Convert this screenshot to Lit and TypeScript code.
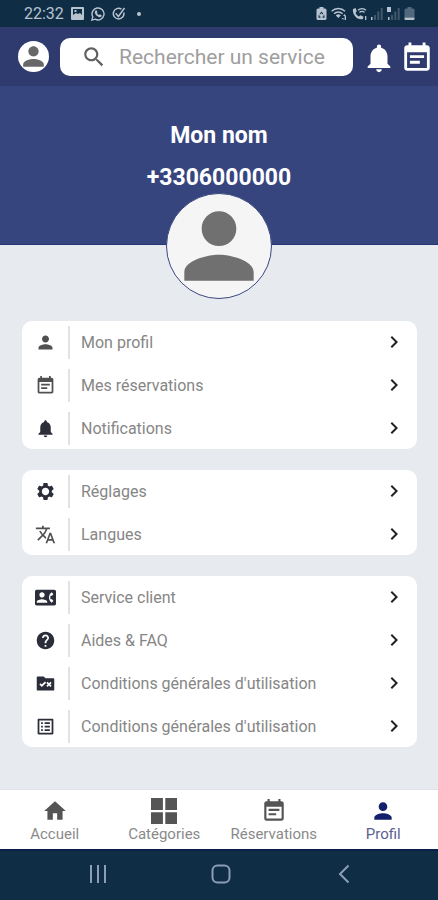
import { LitElement, html, css, svg } from "lit";
import { customElement, property } from "lit/decorators.js";

const ICONS: Record<string, string> = {
  person:
    "M12 12c2.21 0 4-1.79 4-4s-1.79-4-4-4-4 1.79-4 4 1.79 4 4 4zm0 2c-2.67 0-8 1.34-8 4v2h16v-2c0-2.66-5.33-4-8-4z",
  event:
    "M17 10H7v2h10v-2zm2-7h-1V1h-2v2H8V1H6v2H5c-1.11 0-1.99.9-1.99 2L3 19c0 1.1.89 2 2 2h14c1.1 0 2-.9 2-2V5c0-1.1-.9-2-2-2zm0 16H5V8h14v11zm-5-5H7v2h7v-2z",
  bell:
    "M12 22c1.1 0 2-.9 2-2h-4c0 1.1.89 2 2 2zm6-6v-5c0-3.07-1.64-5.64-4.5-6.32V4c0-.83-.67-1.5-1.5-1.5s-1.5.67-1.5 1.5v.68C7.63 5.36 6 7.92 6 11v5l-2 2v1h16v-1l-2-2z",
  settings:
    "M19.14 12.94c.04-.3.06-.61.06-.94 0-.32-.02-.64-.07-.94l2.03-1.58c.18-.14.23-.41.12-.61l-1.92-3.32c-.12-.22-.37-.29-.59-.22l-2.39.96c-.5-.38-1.03-.7-1.62-.94l-.36-2.54c-.04-.24-.24-.41-.48-.41h-3.84c-.24 0-.43.17-.47.41l-.36 2.54c-.59.24-1.13.57-1.62.94l-2.39-.96c-.22-.08-.47 0-.59.22L2.74 8.87c-.12.21-.08.47.12.61l2.03 1.58c-.05.3-.09.63-.09.94s.02.64.07.94l-2.03 1.58c-.18.14-.23.41-.12.61l1.92 3.32c.12.22.37.29.59.22l2.39-.96c.5.38 1.03.7 1.62.94l.36 2.54c.05.24.24.41.48.41h3.84c.24 0 .44-.17.47-.41l.36-2.54c.59-.24 1.13-.56 1.62-.94l2.39.96c.22.08.47 0 .59-.22l1.92-3.32c.12-.22.07-.47-.12-.61l-2.01-1.58zM12 16.2c-2.32 0-4.2-1.88-4.2-4.2s1.88-4.2 4.2-4.2 4.2 1.88 4.2 4.2-1.88 4.2-4.2 4.2z",
  translate:
    "M12.87 15.07l-2.54-2.51.03-.03c1.74-1.94 2.98-4.17 3.71-6.53H17V4h-7V2H8v2H1v1.99h11.17C11.5 7.92 10.44 9.75 9 11.35 8.07 10.32 7.3 9.19 6.69 8h-2c.73 1.63 1.73 3.17 2.98 4.56l-5.09 5.02L4 19l5-5 3.11 3.11.76-2.04zM18.5 10h-2L12 22h2l1.12-3h4.75L21 22h2l-4.5-12zm-2.62 7l1.62-4.33L19.12 17h-3.24z",
  contact:
    "M22 3H2C.9 3 0 3.9 0 5v14c0 1.1.9 2 2 2h20c1.1 0 1.99-.9 1.99-2L24 5c0-1.1-.9-2-2-2zM8 6c1.66 0 3 1.34 3 3s-1.34 3-3 3-3-1.34-3-3 1.34-3 3-3zm6 12H2v-1c0-2 4-3.1 6-3.1s6 1.1 6 3.1v1zm3.85-4h1.64L21 16l-1.99 1.99c-1.31-.98-2.28-2.38-2.73-3.99-.18-.64-.28-1.31-.28-2s.1-1.36.28-2c.45-1.62 1.42-3.01 2.73-3.99L21 8l-1.51 2h-1.64c-.22.63-.35 1.3-.35 2s.13 1.37.35 2z",
  help:
    "M12 2C6.48 2 2 6.48 2 12s4.48 10 10 10 10-4.48 10-10S17.52 2 12 2zm1 17h-2v-2h2v2zm2.07-7.75l-.9.92C13.45 12.9 13 13.5 13 15h-2v-.5c0-1.1.45-2.1 1.17-2.83l1.24-1.26c.37-.36.59-.86.59-1.41 0-1.1-.9-2-2-2s-2 .9-2 2H8c0-2.21 1.79-4 4-4s4 1.79 4 4c0 .88-.36 1.68-.93 2.25z",
  rules:
    "M20 6h-8l-2-2H3c-.6 0-1 .4-1 1v14c0 .6.4 1 1 1h18c.6 0 1-.4 1-1V7c0-.6-.4-1-1-1zM7.83 16L5 13.17l1.41-1.41 1.41 1.41 3.54-3.54 1.41 1.41L7.83 16zM17.41 13L19 14.59 17.59 16 16 14.41 14.41 16 13 14.59 14.59 13 13 11.41 14.41 10 16 11.59 17.59 10 19 11.41 17.41 13z",
  list:
    "M19 5v14H5V5h14m1.1-2H3.9c-.5 0-.9.4-.9.9v16.2c0 .4.4.9.9.9h16.2c.4 0 .9-.5.9-.9V3.9c0-.5-.5-.9-.9-.9zM11 7h6v2h-6V7zm0 4h6v2h-6v-2zm0 4h6v2h-6zM7 7h2v2H7zm0 4h2v2H7zm0 4h2v2H7z",
  search:
    "M15.5 14h-.79l-.28-.27C15.41 12.59 16 11.11 16 9.5 16 5.91 13.09 3 9.5 3S3 5.91 3 9.5 5.91 16 9.5 16c1.61 0 3.09-.59 4.23-1.57l.27.28v.79l5 4.99L20.49 19l-4.99-5zm-6 0C7.01 14 5 11.99 5 9.5S7.01 5 9.5 5 14 7.01 14 9.5 11.99 14 9.5 14z",
  home: "M10 20v-6h4v6h5v-8h3L12 3 2 12h3v8z",
  grid: "M0 0h11v11H0zM13.200 0h10.800v11H13.200zM0 13.200h11V24H0zM13.200 13.200h10.800V24H13.200z",
  chevron: "M10 6L8.590 7.410 13.170 12l-4.580 4.590L10 18l6-6z",
};

@customElement("ui-icon")
export class UiIcon extends LitElement {
  @property() name = "";

  static styles = css`
    :host {
      display: block;
      flex: none;
      width: 24px;
      height: 24px;
    }
    svg {
      display: block;
      width: 100%;
      height: 100%;
      fill: currentColor;
    }
  `;

  render() {
    return html`<svg viewBox="0 0 24 24" aria-hidden="true">
      ${svg`<path fill-rule="evenodd" d=${ICONS[this.name] ?? ""}></path>`}
    </svg>`;
  }
}

@customElement("status-bar")
export class StatusBar extends LitElement {
  static styles = css`
    :host {
      display: flex;
      align-items: center;
      height: 27px;
      padding: 0 23px 0 24px;
      background: #102d46;
      color: #b7c3cf;
      font-size: 16px;
      line-height: 20px;
    }
    .left,
    .right {
      display: flex;
      align-items: center;
    }
    .left {
      gap: 7px;
      flex: 1;
    }
    .right {
      gap: 4px;
    }
    svg {
      display: block;
      flex: none;
    }
    .dot {
      width: 4px;
      height: 4px;
      margin-left: 4px;
      border-radius: 50%;
      background: #b7c3cf;
    }
  `;

  render() {
    return html`
      <div class="left">
        <time>22:32</time>
        <svg width="13" height="13" viewBox="0 0 13 13">
          <path fill="#b7c3cf" fill-rule="evenodd" d="M1 0h11a1 1 0 0 1 1 1v11a1 1 0 0 1-1 1H1a1 1 0 0 1-1-1V1a1 1 0 0 1 1-1zM2 2v6l3-2 2 1 2-1 2 2V2zM3.500 3h2v2h-2z" />
        </svg>
        <svg width="14" height="14" viewBox="0 0 14 14">
          <path fill="none" stroke="#b7c3cf" stroke-width="1.400" d="M.9 13.100l.9-3.200a6 6 0 1 1 2.300 2.300z" />
          <path fill="#b7c3cf" d="M4.600 3.500l1-.2.9 1.900-.6.900c.5 1 1.200 1.600 2.100 2l.9-.8 1.800.9c.1 1.300-.9 2-2 2C6.300 10 4 7.500 3.800 5.300c0-.8.3-1.400.8-1.800z" />
        </svg>
        <svg width="14" height="14" viewBox="0 0 14 14">
          <path fill="none" stroke="#b7c3cf" stroke-width="1.500" d="M9.500 2.200a5.300 5.300 0 1 0 2.300 3.300M3.700 6.300l2.700 3.200L12.500 1" />
        </svg>
        <span class="dot"></span>
      </div>
      <div class="right">
        <svg width="11" height="13" viewBox="0 0 11 13">
          <path fill="#b7c3cf" fill-rule="evenodd" d="M3.500 0h4v1.500H9a1.500 1.500 0 0 1 1.500 1.500v8.500A1.500 1.500 0 0 1 9 13H2a1.500 1.500 0 0 1-1.500-1.500V3A1.500 1.500 0 0 1 2 1.500h1.500zM5.500 4.500L3.300 7.200h1.200L5.500 6l1 1.200h1.200zM2.500 8.200v2.500h2V9.500h-1V8.200zm4 1.300v1.200h2V8.200h-1v1.300z" />
        </svg>
        <svg width="17" height="14" viewBox="0 0 17 14">
          <path fill="none" stroke="#b7c3cf" stroke-width="1.400" d="M.6 4.300a9.500 9.500 0 0 1 13.400 0M3 6.800a6 6 0 0 1 8.600 0" />
          <path fill="#b7c3cf" d="M4.800 8.500a3.600 3.600 0 0 1 5 0L7.300 11zM12 9l1.700-2 1.300 2v4h-1.400V9zM10.500 11h2v2z" />
        </svg>
        <svg width="15" height="14" viewBox="0 0 15 14">
          <path fill="#b7c3cf" d="M1 2l2.500-1 1.300 3.200-1.200 1.500c.6 1.700 1.700 2.900 3.300 3.800l1.600-1.200 3 1.500-.6 2.200C5.700 13.500 0 8 1 2zM13 9h1.300v4H13z" />
          <path fill="none" stroke="#b7c3cf" stroke-width="1.300" d="M6 3.300a5.500 5.500 0 0 1 8 0M7.500 5.500a3.500 3.500 0 0 1 5 0" />
        </svg>
        <svg width="12" height="13" viewBox="0 0 12 13">
          <path fill="#b7c3cf" d="M0 10h1.500v3H0z" />
          <path fill="#40586c" d="M3 8h2v5H3zM6.300 4.500h2V13h-2zM9.700 1h2v12h-2z" />
        </svg>
        <svg width="13" height="13" viewBox="0 0 13 13">
          <path fill="#b7c3cf" d="M0 0h4v5H0zM1 10h1.500v3H1z" />
          <path fill="#40586c" d="M4 8h2v5H4zM7.300 4.500h2V13h-2zM10.700 1h2v12h-2z" />
        </svg>
        <svg width="11" height="13" viewBox="0 0 11 13">
          <path fill="#52697d" d="M3.500 0h4v1.500H9A1.500 1.500 0 0 1 10.500 3v7.500H.5V3A1.500 1.500 0 0 1 2 1.500h1.500z" />
          <path fill="#b7c3cf" d="M.5 10.500h10V12a1 1 0 0 1-1 1h-8a1 1 0 0 1-1-1z" />
        </svg>
      </div>
    `;
  }
}

@customElement("top-bar")
export class TopBar extends LitElement {
  static styles = css`
    :host {
      display: flex;
      align-items: center;
      height: 59px;
      padding: 0 4px 0 18px;
      box-sizing: border-box;
      background: #2f3a6f;
    }
    button {
      display: block;
      flex: none;
      padding: 0;
      border: 0;
      background: none;
      color: #fff;
    }
    .avatar {
      width: 31px;
      height: 31px;
      border-radius: 50%;
      background: #fff;
      color: #686868;
    }
    .avatar ui-icon {
      width: 31px;
      height: 31px;
    }
    .search {
      display: flex;
      align-items: center;
      gap: 12px;
      flex: 1;
      min-width: 0;
      height: 38px;
      margin: 0 9px 0 11px;
      padding: 0 8px 0 21px;
      box-sizing: border-box;
      border-radius: 10px;
      background: #fff;
      color: #606060;
    }
    .search ui-icon {
      width: 26px;
      height: 26px;
    }
    input {
      appearance: none;
      flex: 1;
      width: 100%;
      min-width: 0;
      padding: 0;
      border: 0;
      outline: 0;
      background: none;
      color: #444;
      font: 400 21px/28px Roboto, sans-serif;
    }
    input::-webkit-search-cancel-button {
      display: none;
    }
    input::placeholder {
      color: #9e9e9e;
      opacity: 1;
    }
    .actions {
      display: flex;
      gap: 4px;
      padding-top: 3px;
    }
    .actions ui-icon {
      width: 34px;
      height: 34px;
    }
  `;

  render() {
    return html`
      <button class="avatar" aria-label="Profil"><ui-icon name="person"></ui-icon></button>
      <label class="search">
        <ui-icon name="search"></ui-icon>
        <input type="search" placeholder="Rechercher un service" aria-label="Rechercher un service" />
      </label>
      <div class="actions">
        <button aria-label="Notifications"><ui-icon name="bell"></ui-icon></button>
        <button aria-label="Réservations"><ui-icon name="event"></ui-icon></button>
      </div>
    `;
  }
}

interface Item {
  icon: string;
  label: string;
  soft?: boolean;
}

const GROUPS: Item[][] = [
  [
    { icon: "person", label: "Mon profil", soft: true },
    { icon: "event", label: "Mes réservations", soft: true },
    { icon: "bell", label: "Notifications" },
  ],
  [
    { icon: "settings", label: "Réglages" },
    { icon: "translate", label: "Langues", soft: true },
  ],
  [
    { icon: "contact", label: "Service client" },
    { icon: "help", label: "Aides & FAQ" },
    { icon: "rules", label: "Conditions générales d'utilisation" },
    { icon: "list", label: "Conditions générales d'utilisation" },
  ],
];

@customElement("menu-card")
export class MenuCard extends LitElement {
  @property({ attribute: false }) items: Item[] = [];

  static styles = css`
    :host {
      display: flex;
      flex-direction: column;
      gap: 1px;
      border-radius: 10px;
      background: #fff;
    }
    .row {
      display: flex;
      align-items: center;
      height: 42px;
      padding: 0 11px 0 13px;
      color: #868686;
      font-size: 16px;
      line-height: 20px;
      text-decoration: none;
    }
    .glyph {
      width: 21px;
      height: 21px;
      color: #2b2d38;
    }
    .glyph.soft {
      color: #505050;
    }
    .label {
      display: flex;
      align-items: center;
      flex: 1;
      height: 33px;
      box-sizing: border-box;
      margin-left: 12px;
      padding: 2px 0 0 11px;
      border-left: 2px solid #e2e2e4;
    }
    .chevron {
      color: #222;
    }
  `;

  render() {
    return this.items.map(
      (item) => html`<a class="row" href="#">
        <ui-icon class="glyph ${item.soft ? "soft" : ""}" name=${item.icon}></ui-icon>
        <span class="label">${item.label}</span>
        <ui-icon class="chevron" name="chevron"></ui-icon>
      </a>`
    );
  }
}

const TABS = [
  { icon: "home", label: "Accueil" },
  { icon: "grid", label: "Catégories" },
  { icon: "event", label: "Réservations" },
  { icon: "person", label: "Profil", active: true },
];

@customElement("tab-bar")
export class TabBar extends LitElement {
  static styles = css`
    :host {
      display: block;
      border-top: 1px solid #dfe2e6;
      border-bottom: 2px solid #0c1f48;
      background: #fff;
    }
    nav {
      display: grid;
      grid-template-columns: repeat(4, 1fr);
    }
    a {
      display: flex;
      flex-direction: column;
      align-items: center;
      gap: 1px;
      padding: 8px 0 5px;
      color: #8a8a8a;
      font-size: 15px;
      line-height: 19px;
      text-decoration: none;
    }
    ui-icon {
      width: 26px;
      height: 26px;
      color: #555;
    }
    .active {
      color: #5b6191;
    }
    .active ui-icon {
      color: #14206b;
    }
  `;

  render() {
    return html`<nav>
      ${TABS.map(
        (tab) => html`<a href="#" class=${tab.active ? "active" : ""}>
          <ui-icon name=${tab.icon}></ui-icon>
          <span>${tab.label}</span>
        </a>`
      )}
    </nav>`;
  }
}

@customElement("system-nav")
export class SystemNav extends LitElement {
  static styles = css`
    :host {
      display: grid;
      grid-template-columns: repeat(3, 1fr);
      height: 49px;
      box-sizing: border-box;
      padding: 0 33px 3px 37px;
      background: #102d46;
    }
    button {
      display: flex;
      align-items: center;
      justify-content: center;
      padding: 0;
      border: 0;
      background: none;
    }
    svg {
      fill: none;
      stroke: #8c9db5;
      stroke-width: 2;
    }
  `;

  render() {
    return html`
      <button aria-label="Applications récentes">
        <svg width="20" height="20" viewBox="0 0 20 20"><path d="M3 1v18M10 1v18M17 1v18" /></svg>
      </button>
      <button aria-label="Écran d'accueil">
        <svg width="20" height="20" viewBox="0 0 20 20"><rect x="1.500" y="1.500" width="17" height="17" rx="5" /></svg>
      </button>
      <button aria-label="Retour">
        <svg width="20" height="20" viewBox="0 0 20 20"><path d="M14.500 1.500L6 10l8.500 8.500" /></svg>
      </button>
    `;
  }
}

@customElement("app-root")
export class AppRoot extends LitElement {
  static styles = css`
    :host {
      display: flex;
      flex-direction: column;
      min-height: 100vh;
      background: #e7ebef;
      font-family: Roboto, "Liberation Sans", sans-serif;
    }
    .hero {
      display: flex;
      flex-direction: column;
      align-items: center;
      padding-top: 36px;
      border-bottom: 1px solid #263478;
      background: #37457f;
      color: #fff;
    }
    h1,
    p {
      margin: 0;
      font-size: 23px;
      font-weight: 700;
      line-height: 28px;
    }
    p {
      margin-top: 14px;
    }
    .portrait {
      width: 104px;
      height: 104px;
      margin: 1px 0 -55px;
      border: 1px solid #3c4780;
      border-radius: 50%;
      background: #f5f5f5;
      color: #707070;
    }
    .portrait ui-icon {
      width: 104px;
      height: 104px;
    }
    main {
      display: flex;
      flex-direction: column;
      flex: 1;
      gap: 21px;
      padding: 76px 21px 42px 22px;
    }
  `;

  render() {
    return html`
      <status-bar></status-bar>
      <top-bar></top-bar>
      <header class="hero">
        <h1>Mon nom</h1>
        <p>+3306000000</p>
        <div class="portrait"><ui-icon name="person"></ui-icon></div>
      </header>
      <main>${GROUPS.map((items) => html`<menu-card .items=${items}></menu-card>`)}</main>
      <tab-bar></tab-bar>
      <system-nav></system-nav>
    `;
  }
}
